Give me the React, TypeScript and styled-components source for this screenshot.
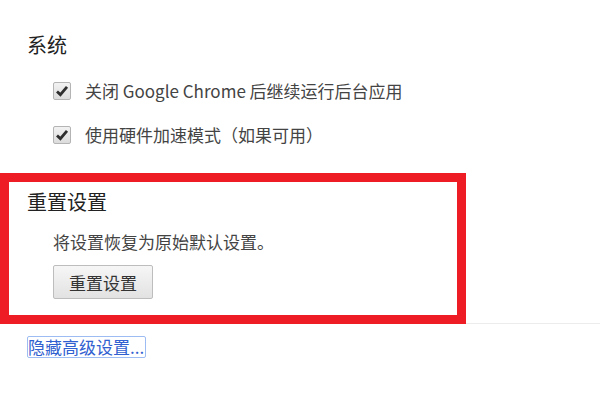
import styled, { createGlobalStyle } from "styled-components";

const GlobalStyle = createGlobalStyle`
  html, body {
    margin: 0;
    padding: 0;
    background: #fff;
    font-family: "Noto Sans CJK SC", "Noto Sans", sans-serif;
    color: #333;
  }
`;

const Page = styled.div`
  width: 600px;
  height: 400px;
  overflow: hidden;
  padding-top: 32px;
  box-sizing: border-box;
`;

const Section = styled.section`
  padding-left: 27px;
`;

const Heading = styled.h3`
  margin: 0;
  font-size: 20px;
  line-height: 26px;
  font-weight: normal;
  color: #222;
`;

const CheckList = styled.div`
  margin-top: 11px;
  padding-left: 26px;
  display: flex;
  flex-direction: column;
`;

const CheckRow = styled.label`
  height: 44px;
  display: flex;
  align-items: center;
  gap: 14px;
  font-size: 17px;
  line-height: 24px;
  color: #444;
`;

const Box = styled.span`
  width: 18px;
  height: 18px;
  box-sizing: border-box;
  border: 1px solid #b4b4b4;
  border-radius: 2px;
  background: linear-gradient(#f2f2f2, #dcdcdc);
  display: flex;
  align-items: center;
  justify-content: center;
`;

const ResetArea = styled.div`
  position: relative;
  margin-top: 16px;
  border-bottom: 1px solid #ececec;
`;

const ResetSection = styled(Section)`
  padding-top: 16px;
  padding-bottom: 24px;
`;

const Description = styled.p`
  margin: 15px 0 0 26px;
  font-size: 17px;
  line-height: 24px;
  color: #444;
`;

const Button = styled.button`
  margin: 11px 0 0 26px;
  width: 100px;
  height: 34px;
  border: 1px solid #bdbdbd;
  border-radius: 2px;
  background: linear-gradient(#f6f6f6, #e2e2e2);
  font-family: inherit;
  font-size: 17px;
  color: #333;
  padding: 0;
`;

const Highlight = styled.div`
  position: absolute;
  left: 0;
  top: 0;
  width: 466px;
  height: 151px;
  box-sizing: border-box;
  border: 9px solid #ee1c25;
  pointer-events: none;
`;

const LinkRow = styled.div`
  padding-left: 27px;
  margin-top: 11px;
`;

const HideLink = styled.a`
  display: inline-block;
  height: 22px;
  line-height: 20px;
  box-sizing: border-box;
  border: 1px solid #9dbcf3;
  border-radius: 2px;
  padding: 0 1px 0 0;
  font-size: 17px;
  color: #3160d0;
  text-decoration: none;
`;

function Check() {
  return (
    <Box>
      <svg width="14" height="14" viewBox="0 0 14 14">
        <path
          d="M2 7.4 L5.4 10.6 L12 2.8"
          fill="none"
          stroke="#2e2e2e"
          strokeWidth="2.8"
        />
      </svg>
    </Box>
  );
}

export default function App() {
  return (
    <>
      <GlobalStyle />
      <Page>
        <Section>
          <Heading>系统</Heading>
          <CheckList>
            <CheckRow>
              <Check />
              关闭 Google Chrome 后继续运行后台应用
            </CheckRow>
            <CheckRow>
              <Check />
              使用硬件加速模式（如果可用）
            </CheckRow>
          </CheckList>
        </Section>
        <ResetArea>
          <ResetSection>
            <Heading>重置设置</Heading>
            <Description>将设置恢复为原始默认设置。</Description>
            <Button>重置设置</Button>
          </ResetSection>
          <Highlight />
        </ResetArea>
        <LinkRow>
          <HideLink href="#">隐藏高级设置...</HideLink>
        </LinkRow>
      </Page>
    </>
  );
}
